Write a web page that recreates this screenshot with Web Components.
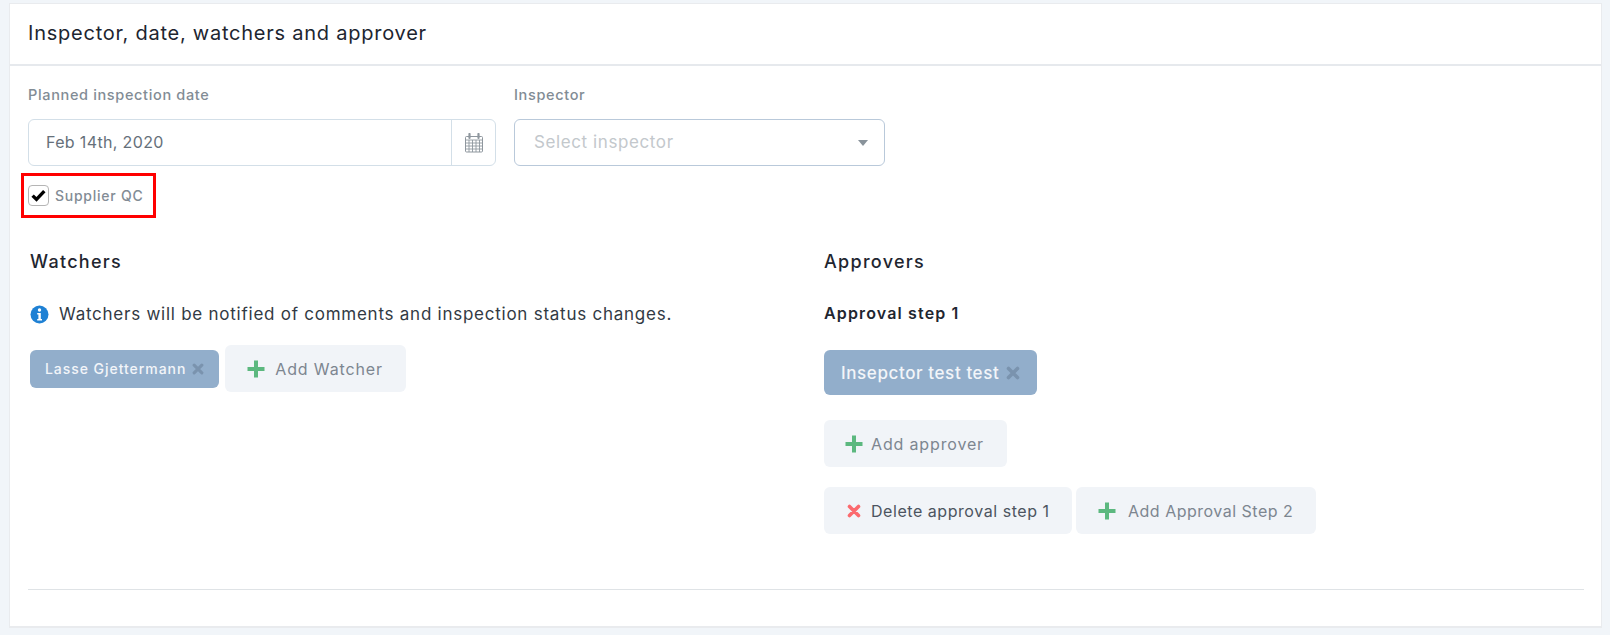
<!DOCTYPE html>
<html><head><meta charset="utf-8"><title>Inspector</title>
<style>
html,body{margin:0;padding:0;height:635px;overflow:hidden;background:#f1f5f9;font-family:Inter,"Noto Sans",sans-serif}
body{padding:3px 8px 0 9px;box-sizing:border-box}
</style></head><body>
<x-card title="Inspector, date, watchers and approver">
  <x-row>
    <x-field label="Planned inspection date" w="468"><x-date value="Feb 14th, 2020"></x-date></x-field>
    <x-field label="Inspector" w="371"><x-select placeholder="Select inspector"></x-select></x-field>
  </x-row>
  <x-check label="Supplier QC"></x-check>
  <x-columns>
    <x-col>
      <x-heading>Watchers</x-heading>
      <x-info>Watchers will be notified of comments and inspection status changes.</x-info>
      <x-inline style="margin-top:20px">
        <x-tag>Lasse Gjettermann</x-tag>
        <x-btn icon="plus" w="181" pad="22" gap="10" ls=".85">Add Watcher</x-btn>
      </x-inline>
    </x-col>
    <x-col>
      <x-heading>Approvers</x-heading>
      <x-heading sub>Approval step 1</x-heading>
      <x-tag big>Insepctor test test</x-tag>
      <x-inline style="margin-top:25px"><x-btn icon="plus" w="183" pad="21" gap="8" ls=".85">Add approver</x-btn></x-inline>
      <x-inline style="margin-top:20px;gap:4px">
        <x-btn icon="times" w="248" pad="23" gap="10" ls=".55" dark>Delete approval step 1</x-btn>
        <x-btn icon="plus" w="240" pad="22" gap="12" ls=".5">Add Approval Step 2</x-btn>
      </x-inline>
    </x-col>
  </x-columns>
  <x-rule></x-rule>
</x-card>
<script>
const ICONS={
 plus:'<svg width="18" height="18" viewBox="0 0 18 18"><path d="M7 .5h4V7h6.500v4H11v6.500H7V11H.5V7H7z" fill="#5cb87f"/></svg>',
 times:'<svg width="14" height="14" viewBox="0 0 14 14"><path d="M2.500 2.500l9 9M11.500 2.500l-9 9" stroke="#fb6a6e" stroke-width="3.600" stroke-linecap="round" fill="none"/></svg>',
 x:'<svg width="100%" height="100%" viewBox="0 0 14 14"><path d="M2.500 2.500l9 9M11.500 2.500l-9 9" stroke="#7a93ae" stroke-width="3.600" stroke-linecap="round" fill="none"/></svg>'
};
function def(name,css,html){
  customElements.define(name,class extends HTMLElement{
    connectedCallback(){
      if(this.shadowRoot)return;
      const r=this.attachShadow({mode:'open'});
      r.innerHTML='<style>'+css+'</style>'+(typeof html==='function'?html(this):html);
    }
  });
}
def('x-card',`
 :host{display:block;height:625px;box-sizing:border-box;background:#fff;border:1px solid #e9ebee;border-bottom-width:2px}
 header{height:62px;box-sizing:border-box;padding:0 0 2px 18px;display:flex;align-items:center;border-bottom:2px solid #e6e9ed;font-size:20px;letter-spacing:.76px;color:#1d2530;font-weight:400}
 main{padding:19px 17px 0 18px}
`,h=>`<header>${h.getAttribute('title')}</header><main><slot></slot></main>`);
def('x-row',':host{display:flex;gap:18px}','<slot></slot>');
def('x-field',`
 :host{display:block}
 label{display:block;height:20px;line-height:20px;font-size:14.500px;letter-spacing:.65px;font-weight:500;color:#828c95;margin-bottom:14px}
`,h=>`<style>:host{width:${h.getAttribute('w')}px}</style><label>${h.getAttribute('label')}</label><slot></slot>`);
def('x-date',`
 :host{display:flex;height:47px;box-sizing:border-box;border:1px solid #d3dfe8;border-radius:6px;color:#66707a;font-size:16px;letter-spacing:.35px;background:#fff}
 .v{flex:1;display:flex;align-items:center;padding-left:17px;padding-bottom:1px}
 .a{width:43px;border-left:1px solid #d3dfe8;display:flex;align-items:center;justify-content:center}
`,h=>`<div class="v">${h.getAttribute('value')}</div><div class="a"><svg width="18" height="20" viewBox="0 0 18 20" fill="none" stroke="#8f979e">
<rect x=".5" y="3.500" width="17" height="15.500" rx="1"/><path d="M.5 7h17M.5 10h17M.5 13h17M.5 16h17M4 7v12M7.500 7v12M11 7v12M14.500 7v12" stroke-width=".9"/><path d="M4.500 1v4M13.500 1v4" stroke-width="2.200" stroke-linecap="round"/></svg></div>`);
def('x-select',`
 :host{display:flex;align-items:center;height:47px;box-sizing:border-box;border:1px solid #b9c9da;border-radius:6px;padding:0 16px 0 19px;justify-content:space-between;color:#c3c8cc;font-size:17px;letter-spacing:.6px}
 span{padding-bottom:1px}
 i{width:0;height:0;border:5px solid transparent;border-top:6px solid #89939b;border-bottom:0}
`,h=>`<span>${h.getAttribute('placeholder')}</span><i></i>`);
def('x-check',`
 :host{display:flex;align-items:center;gap:6px;width:135px;height:45px;box-sizing:border-box;border:3px solid #f00;margin:7px 0 0 -7px;padding:0 0 0 4px;font-size:14px;letter-spacing:.75px;font-weight:500;color:#828c95}
 b{display:flex;align-items:center;justify-content:center;width:21px;height:21px;box-sizing:border-box;border:1px solid #b5b5b5;border-radius:4px;background:#fff;flex:none}
`,h=>`<b><svg width="15" height="13" viewBox="0 0 15 13"><path d="M1.600 6.600l3.900 3.800 7.800-8.200" fill="none" stroke="#000" stroke-width="3.400"/></svg></b><span>${h.getAttribute('label')}</span>`);
def('x-columns',':host{display:grid;grid-template-columns:794px 1fr;padding:0 0 0 2px;margin-top:33px;height:338px}','<slot></slot>');
def('x-col',':host{display:block}','<slot></slot>');
def('x-heading',`
 :host{display:block;height:22px;line-height:22px;font-size:18px;letter-spacing:1.3px;font-weight:500;color:#1f2630}
 :host([sub]){font-size:16px;letter-spacing:1.15px;font-weight:600;margin-top:29px;margin-bottom:26px}
`,'<slot></slot>');
def('x-info',`
 :host{display:flex;align-items:center;gap:10px;margin-top:30px;height:22px;font-size:17px;letter-spacing:.75px;color:#323a44}
`,`<svg width="19" height="19" viewBox="0 0 19 19"><circle cx="9.500" cy="9.500" r="9" fill="#1f81d4"/><circle cx="9.500" cy="5" r="1.700" fill="#fff"/><path d="M7.200 8h3.600v6h1.200v1.500H7.200V14h1.200V9.500H7.200z" fill="#fff"/></svg><span><slot></slot></span>`);
def('x-inline',':host{display:flex;align-items:center;gap:6px}','<slot></slot>');
def('x-tag',`
 :host{display:inline-flex;align-items:center;gap:6px;height:38px;box-sizing:border-box;padding:0 15px;background:#92aecb;border-radius:6px;color:#f2f5f9;font-size:14px;letter-spacing:.95px;font-weight:500}
 :host([big]){height:45px;padding:0 17px;font-size:17px;letter-spacing:.6px;gap:7px}
 i{display:block;width:12px;height:12px}
 :host([big]) i{width:14px;height:14px}
 svg{display:block}
`,`<span><slot></slot></span><i>${ICONS.x}</i>`);
def('x-btn',`
 :host{display:inline-flex;align-items:center;height:47px;box-sizing:border-box;background:#f1f4f8;border-radius:6px;color:#7d8690;font-size:16px}
 :host([dark]){color:#4c5460}
 svg{display:block}
`,h=>`<style>:host{width:${h.getAttribute('w')}px;padding-left:${h.getAttribute('pad')}px;letter-spacing:${h.getAttribute('ls')}px}span{margin-left:${h.getAttribute('gap')}px}</style>${ICONS[h.getAttribute('icon')]}<span><slot></slot></span>`);
def('x-rule',':host{display:block;height:0;border-top:1px solid #dfe3e6}','');
</script>
</body></html>
